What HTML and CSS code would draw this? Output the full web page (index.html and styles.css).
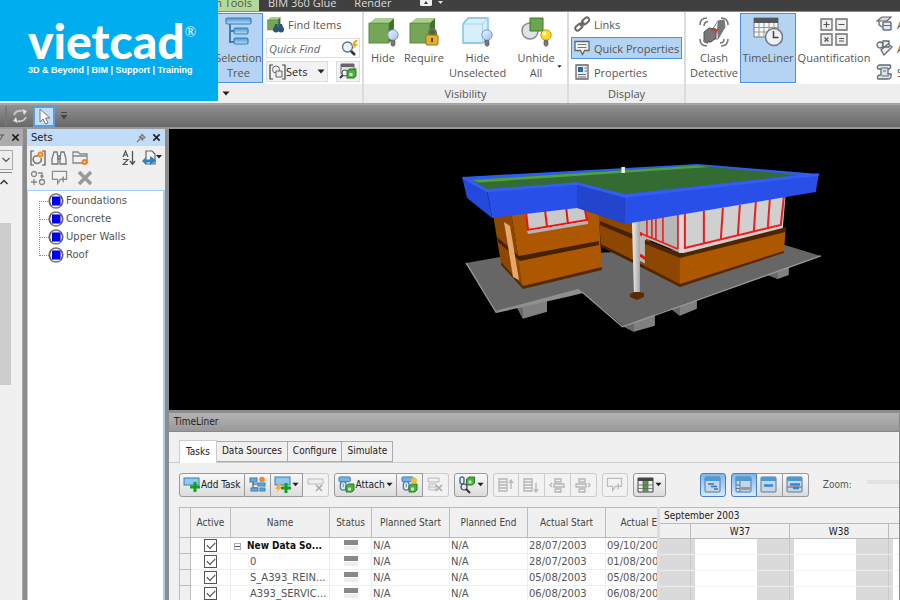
FILE: index.html
```html
<!DOCTYPE html>
<html lang="en">
<head>
<meta charset="utf-8">
<meta name="viewport" content="width=device-width, initial-scale=1">
<title>vietcad – TimeLiner</title>
<link rel="stylesheet" href="styles.css">
</head>
<body>
<svg class="defs" aria-hidden="true">
  <defs>
    <linearGradient id="bulbBlue" x1="0" y1="0" x2="1" y2="1"><stop offset="0" stop-color="#f2f8ff"/><stop offset="1" stop-color="#9dbbee"/></linearGradient>
    <linearGradient id="barBlue" x1="0" y1="0" x2="0" y2="1"><stop offset="0" stop-color="#4a97d0"/><stop offset="1" stop-color="#b4defa"/></linearGradient>
    <linearGradient id="pillar" x1="0" y1="0" x2="1" y2="0"><stop offset="0" stop-color="#f0f0f0"/><stop offset="1" stop-color="#a5a5a5"/></linearGradient>
    <symbol id="cube" viewBox="0 0 26 26"><path d="M1 6 7 1H25L20 6Z" fill="#a9cf8d"/><path d="M20 6 25 1V20L20 25Z" fill="#41702d"/><path d="M1 6H20V25H1Z" fill="#74a656" stroke="#568840"/></symbol>
    <symbol id="bulb" viewBox="0 0 12 18"><circle cx="6" cy="6" r="5.2" fill="url(#bulbBlue)" stroke="#7d9acb"/><path d="M4 11.500H8V16L6 17.500 4 16Z" fill="#777" stroke="#555" stroke-width=".6"/></symbol>
    <symbol id="bulbOn" viewBox="0 0 12 18"><circle cx="6" cy="6" r="5.200" fill="#ffd928" stroke="#c79a13"/><circle cx="4.500" cy="4.500" r="2" fill="#fff6a8"/><path d="M4 11.500H8V16L6 17.500 4 16Z" fill="#777" stroke="#555" stroke-width=".6"/></symbol>
    <symbol id="down" viewBox="0 0 8 5"><path d="M.5.5H7.500L4 4.500Z" fill="#222"/></symbol>
    <symbol id="cross" viewBox="0 0 10 10"><path d="M1.500 1.500 8.500 8.500M8.500 1.500 1.500 8.500" stroke="#222" stroke-width="1.800"/></symbol>
    <symbol id="plus" viewBox="0 0 10 10"><path d="M3.500 0H6.500V3.500H10V6.500H6.500V10H3.500V6.500H0V3.500H3.500Z" fill="#15a01c"/></symbol>
    <symbol id="clip" viewBox="0 0 18 18"><rect x="1" y="1" width="12" height="5" rx="1" fill="#72b5e4" stroke="#3d7faf"/><rect x="2.500" y="6" width="6" height="9" rx="3" fill="#e4eef8" stroke="#4f7ba8" stroke-width="1.400"/><path d="M5.500 8V12" stroke="#4f7ba8"/></symbol>
    <symbol id="box" viewBox="0 0 10 10"><path d="M1 3 3.500 1H9V7L7 9H1Z" fill="#4fae43" stroke="#2c7c25"/><path d="M3 4.500H6V7.500H3Z" fill="#bfe8b2"/></symbol>
    <symbol id="comment" viewBox="0 0 18 16"><path d="M1.500 1.500H16.500V10H10L7 14.500V10H1.500Z" fill="#f2f2f2" stroke="#8a8a8a" stroke-width="1.300"/><path d="M13 7V13M10 10H16" stroke="#8a8a8a" stroke-width="1.500"/></symbol>
    <symbol id="ball" viewBox="0 0 16 16"><circle cx="8" cy="8" r="7" fill="#eee" stroke="#777" stroke-width="1.300"/><path d="M3 3Q0 8 3 13M13 3Q16 8 13 13" stroke="#555" fill="none"/><rect x="4" y="3.500" width="8.500" height="9" fill="#0000f0"/></symbol>
    <symbol id="chart" viewBox="0 0 18 18"><rect x="1" y="1" width="15" height="15" rx="1" fill="#c9d6e2" stroke="#537b9f"/><path d="M1 1H16V5H1Z" fill="#4b9bd7"/></symbol>
    <symbol id="calc" viewBox="0 0 13 13"><path d="M1 1H12V12H1Z" fill="#efefef" stroke="#707070" stroke-width="1.400"/></symbol>
  </defs>
</svg>

<a class="brand" href="#" aria-label="vietcad home">
  <span class="brand-name">vietcad<sup>®</sup></span>
  <span class="brand-line">3D &amp; Beyond | BIM | Support | Training</span>
</a>

<nav class="ribbon-tabs" aria-label="Ribbon tabs">
  <button class="rtab active" type="button">Item Tools</button>
  <button class="rtab" type="button">BIM 360 Glue</button>
  <button class="rtab" type="button">Render</button>
  <button class="rtab mini" type="button" aria-label="Minimise ribbon">
    <svg width="24" height="8" viewBox="0 0 24 8"><rect width="12" height="7" rx="1.500" fill="#eee"/><path d="M4 5 6 2 8 5Z" fill="#333"/><path d="M18 2H23L20.500 5Z" fill="#ddd"/></svg>
  </button>
</nav>

<header class="ribbon">
  <section class="panel select-panel">
    <div class="panel-body">
      <button class="big on" type="button">
        <svg width="28" height="30" viewBox="0 0 28 30"><path d="M5 6V25H12M5 14H12" fill="none" stroke="#3c7db2" stroke-width="2"/><g fill="url(#barBlue)" stroke="#3c7db2" stroke-width="1.200"><rect x="1" y="1" width="25" height="6" rx="1.500"/><rect x="9" y="11" width="14" height="6" rx="1.500"/><rect x="9" y="21" width="14" height="6" rx="1.500"/></g></svg>
        <span>Selection Tree</span>
      </button>
      <div class="find-col">
        <button class="small find" type="button">
          <svg width="17" height="17" viewBox="0 0 17 17"><use href="#cube" width="14" height="15"/><g fill="#2f537f"><circle cx="9" cy="13.500" r="3"/><circle cx="14" cy="13.500" r="3"/><path d="M8 8H10.500L11 13H7ZM12.500 8H15L16.500 13H12Z"/></g></svg>
          <span>Find Items</span>
        </button>
        <label class="quick">
          <input type="text" placeholder="Quick Find" aria-label="Quick Find">
          <svg width="18" height="18" viewBox="0 0 18 18"><path d="M8 10 14 16" stroke="#333" stroke-width="2.500"/><circle cx="6.500" cy="8" r="5" fill="#e7f2fc" stroke="#607284" stroke-width="1.300"/><path d="M14 1 10 7H13L11 11 17 5H14L17 1Z" fill="#f5a623"/></svg>
        </label>
        <div class="sets-row">
          <button class="sets-btn" type="button" aria-haspopup="menu">
            <svg width="17" height="16" viewBox="0 0 17 16"><path d="M4 1H1V15H4M13 1H16V15H13" fill="none" stroke="#444" stroke-width="1.200"/><g fill="#eee" stroke="#666"><circle cx="7" cy="5.500" r="3.500"/><path d="M7 7H13V13H7Z"/></g></svg>
            <span>Sets</span>
            <svg class="push" width="8" height="5"><use href="#down"/></svg>
          </button>
          <button class="tool-btn" type="button" aria-label="Selection inspector">
            <svg width="18" height="17" viewBox="0 0 18 17"><path d="M2 1H15V11H2Z" fill="#ddd" stroke="#666"/><path d="M2 1H15V4H2Z" fill="#666"/><path d="M1 15 4 12" stroke="#333" stroke-width="2"/><circle cx="6" cy="10" r="3" fill="#e7f2fc" stroke="#555"/><use href="#box" x="7" y="5" width="11" height="11"/></svg>
          </button>
        </div>
      </div>
    </div>
    <h2 class="panel-title"><svg width="8" height="5"><use href="#down"/></svg></h2>
  </section>

  <section class="panel">
    <div class="panel-body">
      <button class="big w-hide" type="button">
        <svg width="31" height="30" viewBox="0 0 31 30"><use href="#cube" width="27" height="27"/><use href="#bulb" x="19" y="12" width="12" height="18"/></svg>
        <span>Hide</span>
      </button>
      <button class="big w-req" type="button">
        <svg width="31" height="30" viewBox="0 0 31 30"><use href="#cube" width="27" height="27"/><path d="M20 19V16A3.500 4 0 0 1 27 16V19" fill="none" stroke="#6f6b58" stroke-width="2"/><rect x="17" y="18" width="12" height="10" rx="1" fill="#e5af31" stroke="#9c701a"/><path d="M23 21V25" stroke="#604000" stroke-width="2"/></svg>
        <span>Require</span>
      </button>
      <button class="big w-unsel" type="button">
        <svg width="31" height="30" viewBox="0 0 31 30"><path d="M1 7 6 1H26V20L21 26H1Z" fill="#d7eefb" stroke="#75bce2" stroke-width="1.300"/><path d="M1 7H20.500L26 1M20.500 7V26" fill="none" stroke="#a3d6f0"/><use href="#bulb" x="19" y="12" width="12" height="18"/></svg>
        <span>Hide<br>Unselected</span>
      </button>
      <button class="big w-unhide" type="button">
        <svg width="31" height="30" viewBox="0 0 31 30"><circle cx="9" cy="14" r="8" fill="#e0e3e6" stroke="#858a90" stroke-width="1.500"/><path d="M9 1H22V14H9Z" fill="#6ba54c" stroke="#3f7829"/><use href="#bulbOn" x="19" y="12" width="12" height="18"/></svg>
        <span>Unhide<br>All</span>
        <svg class="corner" width="5" height="3"><use href="#down"/></svg>
      </button>
    </div>
    <h2 class="panel-title">Visibility</h2>
  </section>

  <section class="panel">
    <div class="panel-body stack">
      <button class="small" type="button">
        <svg width="16" height="16" viewBox="0 0 16 16"><g fill="none" stroke="#6c6760" stroke-width="2"><rect x="-3.500" y="-2.300" width="8" height="4.600" rx="2.300" transform="translate(4.500 11.500) rotate(-42)"/><rect x="-4.500" y="-2.300" width="8" height="4.600" rx="2.300" transform="translate(12 4.500) rotate(-42)"/><path d="M6 10 10 6"/></g></svg>
        <span>Links</span>
      </button>
      <button class="small on" type="button">
        <svg width="16" height="16" viewBox="0 0 16 16"><path d="M1 1.500H15V10.500H10.500L8.500 14.500 6.500 10.500H1Z" fill="#f4f4f4" stroke="#666" stroke-width="1.300"/><path d="M3.500 4.500H12.500M3.500 7.500H12.500" stroke="#777"/></svg>
        <span>Quick Properties</span>
      </button>
      <button class="small" type="button">
        <svg width="16" height="16" viewBox="0 0 16 16"><path d="M2 1H14V15H2Z" fill="#eee" stroke="#666" stroke-width="1.300"/><path d="M4 3H9V8H4Z" fill="#2769a8"/><path d="M10.500 4H13M10.500 7H13M4 10.500H12M4 13H12" stroke="#68737f" stroke-width="1.200"/></svg>
        <span>Properties</span>
      </button>
    </div>
    <h2 class="panel-title">Display</h2>
  </section>

  <section class="panel tools-panel">
    <div class="panel-body">
      <button class="big w-clash" type="button">
        <svg width="30" height="30" viewBox="0 0 30 30"><path d="M13 13 19 4 25 3 26 10 19 22 13 22Z" fill="#f0f0f0" stroke="#777"/><path d="M19 4 18 12 19 22 26 10 25 3Z" fill="#777"/><path d="M5 15 10 11 17 12V21L12 25H5Z" fill="#777" stroke="#555"/><path d="M12 13 18 13 16 17" stroke="#d23a27" stroke-width="1.500" fill="none"/><path d="M1 8Q1 1 8 1M5 9Q5 5 9 4.500M22 1Q29 1 29 8M1 22Q1 29 8 29M5 23Q6 26 9 26M29 22Q29 29 22 29M25 22Q25 26 21 26" fill="none" stroke="#777" stroke-width="1.600"/></svg>
        <span>Clash Detective</span>
      </button>
      <button class="big on w-time" type="button">
        <svg width="30" height="30" viewBox="0 0 30 30"><path d="M1 1H25V20H1Z" fill="#f6f6f6" stroke="#777"/><path d="M1 1H25V6H1Z" fill="#54565a"/><path d="M1 10.500H25M1 15H25M6 6V20M11 6V20M16 6V20M21 6V20" stroke="#999"/><circle cx="21" cy="20" r="8.500" fill="#eef2f6" stroke="#72777d" stroke-width="1.500"/><path d="M20.500 14V20.500H25.500" fill="none" stroke="#444" stroke-width="1.500"/></svg>
        <span>TimeLiner</span>
      </button>
      <button class="big w-quant" type="button">
        <svg width="28" height="28" viewBox="0 0 28 28"><use href="#calc" width="13" height="13"/><use href="#calc" x="15" width="13" height="13"/><use href="#calc" y="15" width="13" height="13"/><use href="#calc" x="15" y="15" width="13" height="13"/><path d="M3.500 6.500H9.500M6.500 3.500V9.500M18.500 6.500H24.500M4.500 19.500 8.500 23.500M8.500 19.500 4.500 23.500M19 20.500H24M19 23H24" stroke="#555" stroke-width="1.200"/></svg>
        <span>Quantification</span>
      </button>
      <div class="stack">
        <button class="small" type="button">
          <svg width="17" height="16" viewBox="0 0 17 16"><path d="M1 5 6 1H15L11 5ZM3 5V9L6 11" fill="#ddd" stroke="#666" stroke-width="1.200"/><rect x="7" y="6" width="8" height="8" rx="1" fill="#e9edf2" stroke="#65717e" stroke-width="1.500"/><path d="M7 9.500H15" stroke="#65717e"/></svg>
          <span>Autodesk Rendering</span>
        </button>
        <button class="small" type="button">
          <svg width="17" height="16" viewBox="0 0 17 16"><g fill="#eee" stroke="#606a76" stroke-width="1.300"><circle cx="4" cy="5" r="3"/><path d="M7 1H13V7H7ZM5 10 12 4 16 7 8 15Z"/></g></svg>
          <span>Animator</span>
        </button>
        <button class="small" type="button">
          <svg width="17" height="16" viewBox="0 0 17 16"><path d="M3 1H14Q16 3 13 5H12V10H15Q16 15 12 15H2Q0 12 4 11H5V5H2Q0 3 3 1Z" fill="#dfe2e6" stroke="#626a74" stroke-width="1.300"/><path d="M5 4H12M7 7H10M6 12H13" stroke="#626a74"/></svg>
          <span>Scripter</span>
        </button>
      </div>
    </div>
    <h2 class="panel-title"></h2>
  </section>
</header>

<div class="quick-bar" role="toolbar" aria-label="Quick access">
  <span class="grip"></span>
  <button type="button" aria-label="Refresh"><svg width="16" height="14" viewBox="0 0 16 14"><path d="M2 6Q4 1 10 2M14 8Q12 13 6 12" fill="none" stroke="#c8c8c8" stroke-width="2"/><path d="M10 0 15 2 12 6ZM6 14 1 12 4 8Z" fill="#e0e0e0"/></svg></button>
  <button class="pick" type="button" aria-label="Select"><svg width="13" height="17" viewBox="0 0 13 17"><path d="M2 1V14L5 11 7.500 16 10 15 7.500 10H12Z" fill="#fff" stroke="#6a7480"/></svg></button>
  <button type="button" aria-label="More"><svg width="8" height="8" viewBox="0 0 8 8"><path d="M1 .5H7" stroke="#444"/><path d="M.5 3H7.500L4 7.500Z" fill="#444"/></svg></button>
</div>

<main class="workspace">
  <aside class="tree-pane" aria-label="Selection tree">
    <div class="pane-head plain"><svg width="5" height="10" viewBox="0 0 5 10"><path d="M0 7 3 2M0 2H4" stroke="#555"/></svg><button type="button" aria-label="Close selection tree"><svg width="9" height="9"><use href="#cross"/></svg></button></div>
    <div class="tree-pane-body">
      <div class="combo"><select aria-label="Tree mode"><option></option></select><svg width="8" height="6" viewBox="0 0 8 6"><path d="M.5 1 4 4.500 7.500 1" fill="none" stroke="#555" stroke-width="1.200"/></svg></div>
      <button class="scroll-up" type="button" aria-label="Scroll up"><svg width="8" height="6" viewBox="0 0 8 6"><path d="M.5 5 4 1.500 7.500 5" fill="none" stroke="#333" stroke-width="1.500"/></svg></button>
      <div class="scroll-thumb"></div>
    </div>
  </aside>

  <aside class="sets-pane" aria-label="Sets">
    <div class="pane-head">
      <h2>Sets</h2>
      <button type="button" aria-label="Pin"><svg width="10" height="10" viewBox="0 0 10 10"><path d="M1 9 4 6M3 3.500 7 7.500M4.500 4 6 1.500 9 4.500 6.500 6Z" fill="#bbb" stroke="#777" stroke-width="1.200"/></svg></button>
      <button type="button" aria-label="Close sets"><svg width="9" height="9"><use href="#cross"/></svg></button>
    </div>
    <div class="sets-tools">
      <div class="tool-line">
        <button type="button" aria-label="Save selection"><svg width="16" height="16" viewBox="0 0 16 16"><path d="M4 1H1V15H4M12 1H15V15H12" fill="none" stroke="#555" stroke-width="1.200"/><path d="M5 6H8M5 6A4 4 0 1 0 11 8" fill="none" stroke="#777" stroke-width="1.500"/><circle cx="10.500" cy="4.500" r="3" fill="#f58a22"/><circle cx="10.500" cy="4.500" r="1" fill="#ffe3b0"/></svg></button>
        <button type="button" aria-label="Save search"><svg width="16" height="16" viewBox="0 0 16 16"><g fill="#f4f4f4" stroke="#777" stroke-width="1.300"><path d="M3 2H6L7 8V14H1V9ZM10 2H13L15 9V14H9V8Z"/><path d="M7 6H9V9H7Z"/></g></svg></button>
        <button type="button" aria-label="New folder"><svg width="17" height="16" viewBox="0 0 17 16"><path d="M1 2H6L8 4H15V13H1ZM1 6H15" fill="#f2f2f2" stroke="#808890" stroke-width="1.300"/><circle cx="12.500" cy="12" r="3" fill="#f57c1f"/><circle cx="12.500" cy="12" r="1" fill="#ffe3b0"/></svg></button>
        <span class="spacer"></span>
        <button type="button" aria-label="Sort"><svg width="14" height="16" viewBox="0 0 14 16"><path d="M1 7 3.500 1 6 7M2 5H5M1 9.500H6L1 14.500H6" fill="none" stroke="#555" stroke-width="1.200"/><path d="M10.500 1V14M8 11 10.500 14.500 13 11" fill="none" stroke="#555" stroke-width="1.300"/></svg></button>
        <button type="button" aria-label="Import and export"><svg width="21" height="16" viewBox="0 0 21 16"><path d="M5 1H11L14 4V14H5Z" fill="#f2f2f2" stroke="#666" stroke-width="1.200"/><path d="M1 11 5 7V9.500H9V6L15 10V11L9 15V12.500H5V15Z" fill="#2e83c8"/><path d="M15 5H21L18 8.500Z" fill="#222"/></svg></button>
      </div>
      <div class="tool-line">
        <button type="button" aria-label="Duplicate"><svg width="16" height="16" viewBox="0 0 16 16"><g fill="none" stroke="#888" stroke-width="1.300"><circle cx="4" cy="4" r="2.500"/><circle cx="12" cy="12" r="2.500"/><path d="M8 3H12V7M10.500 5.500 12 7.500 13.500 5.500M1 12H7M4 9V15"/></g></svg></button>
        <button type="button" aria-label="Add comment"><svg width="17" height="16"><use href="#comment" width="17" height="15"/></svg></button>
        <button class="delete" type="button" aria-label="Delete"><svg width="16" height="16" viewBox="0 0 16 16"><path d="M2 2 14 14M14 2 2 14" stroke="#999" stroke-width="3.600"/></svg></button>
      </div>
    </div>
    <ul class="sets-list">
      <li><svg width="16" height="16"><use href="#ball"/></svg>Foundations</li>
      <li><svg width="16" height="16"><use href="#ball"/></svg>Concrete</li>
      <li><svg width="16" height="16"><use href="#ball"/></svg>Upper Walls</li>
      <li><svg width="16" height="16"><use href="#ball"/></svg>Roof</li>
    </ul>
  </aside>

  <div class="stage">
    <div class="viewport">
      <svg viewBox="169 129 731 281" role="img" aria-label="3D building model">
        <path d="M516 306 523 319 547 312V300ZM622 326 634 332 655 326V314ZM671 309 680 316 697 309V300ZM768 275 778 279 789 275V266Z" fill="#808080"/>
        <path d="M516 306 523 319V309ZM622 326 634 332V321ZM671 309 680 316V306ZM768 275 778 279V271Z" fill="#686868"/>
        <path d="M466 263 500 257 785 245 821 256 623 326 581 291 496 312Z" fill="#666"/>
        <path d="M466 263 496 312.500 578 290 583 293 622.500 327 821 256" fill="none" stroke="#9a9a9a" stroke-width="1.300"/>
        <path d="M496 311 578 289 583 293 571 296 497 313Z" fill="#8f8f8f"/>
        <!-- recessed wall -->
        <path d="M598 205 650 220V268L601 246Z" fill="#8d4700"/>
        <path d="M600 221 640 237V242L600 225Z" fill="#452100"/>
        <path d="M601 244 681 284V287L601 247Z" fill="#452100"/>
        <path d="M638 216 646 216V264L638 260Z" fill="#b9b9b9"/>
        <path d="M639 233 646 237M640 255 646 259" stroke="#f01010" stroke-width="3"/>
        <!-- left block -->
        <path d="M493 214 511 212 523 288 501 264Z" fill="#8d4700"/>
        <path d="M511 212 598 200 602 269 523 288Z" fill="#ad5700"/>
        <path d="M497 237 519 256 599 241V245L520 261 498 242Z" fill="#452100"/>
        <path d="M501 262 523 286 602 267V270L523 289 501 265Z" fill="#552900"/>
        <path d="M504 222 510 226 519 280 513 277Z" fill="#e9a76b"/>
        <path d="M525 211 585 203 587 222 528 231Z" fill="#c9c9c9"/>
        <path d="M526 212 528 230 587 220 584 205M545 210 547 227M566 206 568 224" fill="none" stroke="#f01010" stroke-width="2"/>
        <path d="M527 231 588 221V224L528 234Z" fill="#b5b5b5"/>
        <!-- right block -->
        <path d="M645 240 680 254V286L645 268Z" fill="#8d4700"/>
        <path d="M680 254 786 228 784 253 680 286Z" fill="#ad5700"/>
        <path d="M645 240 680 253 786 227V232L680 258 645 244Z" fill="#4d2500"/>
        <path d="M645 266 680 284 784 251V253L680 287 645 269Z" fill="#552900"/>
        <path d="M642 210 679 210V252L642 237Z" fill="#b7b7b7"/>
        <path d="M679 208 786 192 783 228 684 253 679 252Z" fill="#d0d0d0"/>
        <path d="M679 208H684V253H679Z" fill="#d9d9d9"/>
        <path d="M640 233 678 249M647 216V237M652 216V239M656 218 663 217V242M656 218V239M678 212V249" fill="none" stroke="#ee1c1c" stroke-width="1.600"/>
        <path d="M685 213V248L781 225 784 197M704 211V243M723 208 721 239M740 205 738 235M756 202 754 231M770 199 768 227" fill="none" stroke="#ee1c1c" stroke-width="2"/>
        <!-- column -->
        <path d="M632 220H640V294H634Z" fill="url(#pillar)"/>
        <path d="M630 294 634 292H640L644 293V297L637 300 630 297Z" fill="#5b2c03"/>
        <!-- roof -->
        <path d="M462 177 698 164 819 174 625 197 577 184 487 191Z" fill="#2f5bf0"/>
        <path d="M472 180 697 165.500 798 175 625 194 577 182.500 487 189Z" fill="#346b33"/>
        <path d="M472 180 697 165.500 710 167 479 182.500Z" fill="#4da13e"/>
        <path d="M462 177 487 191 492 218 467 198Z" fill="#2348dc"/>
        <path d="M487 190 577 183 577 208 492 218Z" fill="#2850e8"/>
        <path d="M577 183 625 196V224L577 208Z" fill="#2344cc"/>
        <path d="M625 196 819 174 816 192 625 224Z" fill="#2850e8"/>
        <path d="M463 177.500 487 191 577 183.500 625 196.500 819 174.500" fill="none" stroke="#355df2" stroke-width="2.500"/>
        <path d="M621.500 167H625V173H621.500Z" fill="#f4f4ec"/>
      </svg>
    </div>

    <section class="timeliner">
      <h2 class="tl-head">TimeLiner</h2>
      <div class="tl-tabs" role="tablist">
        <button class="tl-tab active" role="tab" aria-selected="true" type="button">Tasks</button>
        <button class="tl-tab" role="tab" aria-selected="false" type="button">Data Sources</button>
        <button class="tl-tab" role="tab" aria-selected="false" type="button">Configure</button>
        <button class="tl-tab" role="tab" aria-selected="false" type="button">Simulate</button>
      </div>
      <div class="tl-body">
        <div class="tl-tools" role="toolbar" aria-label="Task tools">
          <div class="group">
            <button type="button"><svg width="17" height="17" viewBox="0 0 17 17"><rect x="1" y="2" width="15" height="7" fill="#8cc8f0" stroke="#3d7faf"/><use href="#plus" x="7" y="6" width="10" height="10"/></svg>Add Task</button>
            <button type="button" aria-label="Insert task"><svg width="17" height="17" viewBox="0 0 17 17"><path d="M4 5V12H9M4 8H12" stroke="#445" fill="none"/><g fill="#62abdf" stroke="#3b7fb4"><rect x="1" y="2" width="7" height="4"/><rect x="9" y="7" width="7" height="3"/><rect x="2" y="12" width="7" height="3"/><rect x="11" y="12" width="5" height="3"/></g><circle cx="13" cy="3.500" r="2.800" fill="#f5862b"/></svg></button>
            <button type="button" aria-label="Auto-add tasks"><svg width="17" height="17" viewBox="0 0 17 17"><rect x="1" y="1" width="15" height="8" fill="#8cc8f0" stroke="#3d7faf"/><path d="M5 7 1 13H4L2 17 8 11H5L8 7Z" fill="#f4ae28"/><use href="#plus" x="7" y="7" width="10" height="10"/></svg><svg width="7" height="5"><use href="#down"/></svg></button>
            <button type="button" disabled aria-label="Delete task"><svg width="17" height="17" viewBox="0 0 17 17"><path d="M1 3H16V8H1Z" fill="#eee" stroke="#bbb"/><path d="M9 9 15 15M15 9 9 15" stroke="#aaa" stroke-width="1.600"/></svg></button>
          </div>
          <div class="group">
            <button type="button"><svg width="17" height="17" viewBox="0 0 17 17"><use href="#clip" width="17" height="17"/><use href="#box" x="7" y="7" width="10" height="10"/></svg>Attach<svg width="7" height="5"><use href="#down"/></svg></button>
            <button type="button" aria-label="Auto-attach"><svg width="17" height="17" viewBox="0 0 17 17"><use href="#clip" width="17" height="17"/><use href="#box" x="7" y="7" width="10" height="10"/><circle cx="13" cy="4.500" r="3" fill="#f9bb32"/></svg></button>
            <button type="button" disabled aria-label="Clear attachment"><svg width="17" height="17" viewBox="0 0 17 17"><path d="M1 2H12V6H1ZM2 8H9V14H2ZM2 11H9" fill="#eee" stroke="#bbb"/><path d="M9 9 15 15M15 9 9 15" stroke="#aaa" stroke-width="1.600"/></svg></button>
          </div>
          <div class="group">
            <button type="button" aria-label="Find items"><svg width="18" height="18" viewBox="0 0 18 18"><rect x="2" y="1" width="4" height="7" rx="2" fill="#e4eef8" stroke="#4a6e93" stroke-width="1.500"/><use href="#box" x="7" y="0" width="11" height="10"/><circle cx="6" cy="11" r="3" fill="#dceaf7" stroke="#444" stroke-width="1.200"/><path d="M8 13 12 17" stroke="#333" stroke-width="2"/></svg><svg width="7" height="5"><use href="#down"/></svg></button>
          </div>
          <div class="group">
            <button type="button" disabled aria-label="Move up"><svg width="16" height="16" viewBox="0 0 16 16"><path d="M1 2H9V14H1ZM1 5H9M1 8H9M1 11H9M13 12V4M11 6 13 3 15 6" fill="none" stroke="#b5b5b5" stroke-width="1.300"/></svg></button>
            <button type="button" disabled aria-label="Move down"><svg width="16" height="16" viewBox="0 0 16 16"><path d="M1 2H9V14H1ZM1 5H9M1 8H9M1 11H9M13 6V14M11 12 13 15 15 12" fill="none" stroke="#b5b5b5" stroke-width="1.300"/></svg></button>
            <button type="button" disabled aria-label="Outdent"><svg width="16" height="16" viewBox="0 0 16 16"><path d="M6 2H12V5H6ZM5 7H15V10H5ZM6 12H12V15H6ZM3 6 1 8 3 10" fill="none" stroke="#b5b5b5" stroke-width="1.300"/></svg></button>
            <button type="button" disabled aria-label="Indent"><svg width="16" height="16" viewBox="0 0 16 16"><path d="M4 2H10V5H4ZM1 7H11V10H1ZM4 12H10V15H4ZM13 6 15 8 13 10" fill="none" stroke="#b5b5b5" stroke-width="1.300"/></svg></button>
          </div>
          <div class="group">
            <button type="button" disabled aria-label="Add comment"><svg class="faint" width="17" height="15"><use href="#comment"/></svg></button>
          </div>
          <div class="group">
            <button type="button" aria-label="Columns"><svg width="17" height="16" viewBox="0 0 17 16"><path d="M1 1H16V15H1Z" fill="#eee" stroke="#444"/><path d="M1 1H16V4H1Z" fill="#444"/><path d="M6 4H11V15H6Z" fill="#4aa23f"/><path d="M6 4V15M11 4V15M1 8H16M1 11.500H16" stroke="#666" stroke-width=".8"/></svg><svg width="7" height="5"><use href="#down"/></svg></button>
          </div>
          <div class="group views">
            <button class="on" type="button" aria-label="Show Gantt chart"><svg width="18" height="18" viewBox="0 0 18 18"><use href="#chart"/><path d="M4 8H10M7 10.500H13M10 13H14" stroke="#2e78b5" stroke-width="1.600"/></svg></button>
          </div>
          <div class="group">
            <button class="on" type="button" aria-label="Actual dates"><svg width="18" height="18" viewBox="0 0 18 18"><use href="#chart"/><path d="M5 5V16M1 9H5M1 12.500H5" stroke="#537b9f"/><path d="M6 12.500H15" stroke="#999" stroke-width="3"/></svg></button>
            <button type="button" aria-label="Planned dates"><svg width="18" height="18" viewBox="0 0 18 18"><use href="#chart"/><path d="M4 9.500H13" stroke="#2e88d5" stroke-width="2.500"/></svg></button>
            <button type="button" aria-label="Planned versus actual"><svg width="18" height="18" viewBox="0 0 18 18"><use href="#chart"/><path d="M1 11H16" stroke="#888" stroke-width="1.500"/><path d="M4 8.500H14M7 12H13" stroke="#2e88d5" stroke-width="2.500"/></svg></button>
          </div>
          <label class="zoom"><span>Zoom:</span><input type="range" min="0" max="100" value="100"></label>
        </div>

        <div class="plan">
          <div class="tasks">
            <table>
              <colgroup><col class="c-grip"><col class="c-active"><col class="c-name"><col class="c-status"><col class="c-date"><col class="c-date"><col class="c-date"><col class="c-date"></colgroup>
              <thead><tr><th></th><th>Active</th><th>Name</th><th>Status</th><th>Planned Start</th><th>Planned End</th><th>Actual Start</th><th>Actual End</th></tr></thead>
              <tbody>
                <tr><td></td><td><input type="checkbox" checked aria-label="New Data Source active"></td><td class="name root"><button type="button" class="fold" aria-label="Collapse"></button><b>New Data So...</b></td><td><i class="status"></i></td><td>N/A</td><td>N/A</td><td>28/07/2003</td><td>09/10/2003</td></tr>
                <tr><td></td><td><input type="checkbox" checked aria-label="0 active"></td><td class="name">0</td><td><i class="status"></i></td><td>N/A</td><td>N/A</td><td>28/07/2003</td><td>01/08/2003</td></tr>
                <tr><td></td><td><input type="checkbox" checked aria-label="S_A393_REIN active"></td><td class="name">S_A393_REIN...</td><td><i class="status"></i></td><td>N/A</td><td>N/A</td><td>05/08/2003</td><td>05/08/2003</td></tr>
                <tr><td></td><td><input type="checkbox" checked aria-label="A393_SERVIC active"></td><td class="name">A393_SERVIC...</td><td><i class="status"></i></td><td>N/A</td><td>N/A</td><td>06/08/2003</td><td>06/08/2003</td></tr>
              </tbody>
            </table>
          </div>
          <div class="splitter"></div>
          <div class="gantt">
            <div class="month">September 2003</div>
            <div class="weeks"><span></span><span>W37</span><span>W38</span><span></span></div>
            <div class="days"></div>
          </div>
        </div>
      </div>
    </section>
  </div>
</main>
</body>
</html>
```
FILE: styles.css
```css
* { box-sizing: border-box; }

body {
  margin: 0;
  height: 100vh;
  display: flex;
  flex-direction: column;
  overflow: hidden;
  position: relative;
  background: #8c8c8c;
  color: #555;
  font: 11px/15px "Open Sans", "Noto Sans", sans-serif;
}

button, input, select { font: inherit; color: inherit; }
button { margin: 0; padding: 0; border: 0; background: none; white-space: nowrap; }
h2 { margin: 0; font-size: inherit; font-weight: normal; }
svg { display: block; flex: none; }
.defs { position: absolute; width: 0; height: 0; }

/* Brand badge over the ribbon */
.brand {
  position: absolute;
  z-index: 5;
  top: 0;
  left: 0;
  width: 218px;
  height: 101px;
  padding: 18px 0 0 28px;
  background: #00adef;
  color: #fff;
  text-decoration: none;
  white-space: nowrap;
}
.brand-name { display: block; font: 900 48px/46px Lato, sans-serif; }
.brand-name sup { font: 15px/15px "Liberation Serif", serif; vertical-align: 22px; }
.brand-line { display: block; font: bold 9px/12px "Liberation Sans", sans-serif; }

/* Ribbon */
.ribbon-tabs {
  flex: none;
  display: flex;
  height: 12px;
  padding-left: 196px;
  align-items: flex-end;
  background: #404040;
  border-bottom: 1px solid #8a8a8a;
  overflow: hidden;
}
.rtab { height: 17px; padding: 0 9px; color: #ddd; line-height: 15px; }
.rtab.active { width: 63px; padding: 0 7px 0 0; text-align: right; background: #b5d99b; color: #555; }
.rtab.mini { padding: 0 0 0 20px; }

.ribbon {
  flex: none;
  display: flex;
  height: 91px;
  background: linear-gradient(#fff 0 72px, #eee 72px);
  overflow: hidden;
}
.panel { flex: none; display: flex; flex-direction: column; border-right: 2px solid #dcdcdc; }
.select-panel { padding-left: 212px; }
.tools-panel { flex: 1; border-right: 0; }
.panel-body { display: flex; height: 72px; padding: 1px 2px; }
.panel-title { height: 19px; line-height: 19px; text-align: center; }
.select-panel .panel-title { padding: 7px 10px; }

.big {
  position: relative;
  display: flex;
  flex-direction: column;
  align-items: center;
  height: 70px;
  padding-top: 3px;
  border: 1px solid transparent;
  white-space: normal;
  text-align: center;
}
.big > svg:first-child { height: 30px; margin-bottom: 3px; }
.big.on, .small.on { background: #b5d4f3; border: 1px solid #4a90dc; }
.select-panel .big { width: 49px; }
.w-hide { width: 34px; }
.w-req { width: 48px; }
.w-unsel { width: 59px; }
.w-unhide { width: 58px; }
.w-clash { width: 52px; }
.w-time { width: 56px; }
.w-quant { width: 76px; }
.corner { position: absolute; right: 2px; bottom: 14px; }

.small {
  display: flex;
  align-items: center;
  gap: 4px;
  height: 22px;
  padding: 0 2px;
  border: 1px solid transparent;
}
.small.find { padding: 0; }
.stack { display: flex; flex-direction: column; gap: 2px; }
.panel > .stack { width: 115px; }
.tools-panel .panel-body > .stack { padding-left: 1px; }

.find-col { display: flex; flex-direction: column; gap: 3px; width: 97px; padding-left: 3px; }
.quick { display: flex; align-items: center; height: 20px; border: 1px solid #ddd; background: #fff; }
.quick input { flex: 1; min-width: 0; padding: 0 2px; border: 0; background: none; outline: 0; font-style: italic; }
.quick input::placeholder { color: #666; opacity: 1; }
.sets-row { display: flex; justify-content: space-between; }
.sets-btn, .tool-btn { display: flex; align-items: center; height: 21px; background: #f2f2f2; border: 1px solid #ddd; }
.sets-btn { width: 62px; padding: 0 2px; color: #222; }
.push { margin-left: auto; }
.tool-btn { width: 24px; justify-content: center; }

/* Quick access bar */
.quick-bar {
  flex: none;
  display: flex;
  align-items: center;
  gap: 5px;
  height: 26px;
  padding: 2px 5px;
  border-top: 2px solid #a5a5a5;
  border-bottom: 2px solid #999;
  background: linear-gradient(#919191, #686868);
}
.grip { width: 2px; height: 20px; background: #777; }
.pick { display: grid; place-items: center; width: 22px; height: 21px; background: #c4def7; border: 2px solid #5b9ce0; }

/* Workspace */
.workspace { flex: 1; min-height: 0; display: flex; }
.pane-head {
  flex: none;
  display: flex;
  align-items: center;
  gap: 6px;
  height: 17px;
  padding: 0 4px;
  background: #c0dcf6;
  color: #222;
}
.pane-head h2 { flex: 1; }
.pane-head.plain { justify-content: space-between; padding: 0 4px 0 0; background: #acacac; }

.tree-pane { flex: none; display: flex; flex-direction: column; width: 23px; margin-right: 4px; background: #f0f0f0; border-right: 1px solid #aaa; }
.tree-pane-body { flex: 1; display: flex; flex-direction: column; align-items: flex-start; padding-top: 4px; }
.combo { display: grid; grid-template-areas: "c"; place-items: center; width: 13px; height: 20px; border: 1px solid #aaa; border-left: 0; }
.combo > * { grid-area: c; }
.combo select { width: 12px; height: 18px; padding: 0; border: 0; appearance: none; background: #eee; }
.combo svg { pointer-events: none; }
.scroll-up { width: 12px; margin-top: 2px; padding: 6px 0; border-top: 1px solid #888; }
.scroll-thumb { width: 11px; height: 36%; margin-top: 32px; background: #cdcdcd; }

.sets-pane { flex: none; display: flex; flex-direction: column; width: 138px; margin-right: 4px; background: #f0f0f0; font: 10px/18px "DejaVu Sans", sans-serif; }
.sets-tools { padding: 2px 3px; }
.tool-line { display: flex; gap: 5px; height: 20px; }
.tool-line .spacer { flex: 1; }
.delete { margin-left: 4px; }
.sets-list { flex: 1; margin: 0; padding: 1px 0 0 11px; list-style: none; background: #fff; border: 1px solid #a8cdf0; border-width: 1px 2px 0 1px; }
.sets-list li { position: relative; display: flex; align-items: center; gap: 2px; height: 18px; padding-left: 9px; }
.sets-list li::before { content: ""; position: absolute; left: 0; top: -9px; width: 9px; height: 18px; border: dotted #888; border-width: 0 0 1px 1px; }
.sets-list li:first-child::before { top: 8px; height: 1px; border-left: 0; }

.stage { flex: 1; min-width: 0; display: flex; flex-direction: column; gap: 3px; }
.viewport { flex: 3 1 0; min-height: 0; background: #000; }
.viewport svg { width: 100%; height: 100%; }

/* TimeLiner */
.timeliner {
  flex: 2 1 0;
  min-height: 0;
  display: flex;
  flex-direction: column;
  border-right: 1px solid #888;
  background: #f0f0f0;
  font: 10px/16px "DejaVu Sans Condensed", "DejaVu Sans", sans-serif;
  overflow: hidden;
}
.tl-head { flex: none; height: 19px; padding-left: 5px; background: linear-gradient(#b3b3b3, #999); border-bottom: 1px solid #888; color: #222; line-height: 18px; }
.tl-tabs { flex: none; display: flex; align-items: flex-end; height: 31px; padding: 0 10px; border-bottom: 1px solid #ccc; }
.tl-tab { height: 21px; padding: 0 5px; border: 1px solid #aaa; border-left: 0; color: #222; }
.tl-tab.active { height: 23px; margin-bottom: -1px; padding: 0 6px; background: #fff; border: 1px solid #ccc; border-bottom: 0; }
.tl-body { flex: 1; min-height: 0; display: flex; flex-direction: column; padding: 10px 0 0 10px; }

.tl-tools { flex: none; display: flex; gap: 5px; height: 24px; }
.group { flex: none; display: flex; }
.group button {
  display: flex;
  align-items: center;
  justify-content: center;
  gap: 1px;
  min-width: 26px;
  height: 24px;
  padding: 0 3px;
  border: 1px solid #999;
  border-left-width: 0;
  background: linear-gradient(#f8f8f8, #dcdcdc);
  color: #222;
}
.group button:first-child { border-left-width: 1px; border-radius: 3px 0 0 3px; }
.group button:last-child { border-radius: 0 3px 3px 0; }
.group button:only-child { border-radius: 3px; }
.group button:disabled { background: #f2f2f2; border-color: #ccc; }
.group button.on { background: linear-gradient(#7db5ee, #d4ebff); border-color: #4c7fb8; }
.faint { opacity: .5; }
.views { margin-left: 29px; }
.zoom { display: flex; align-items: center; gap: 15px; margin-left: 9px; }
.zoom input { appearance: none; width: 90px; height: 4px; margin: 0 0 6px; background: #e2e2e2; }

.plan { flex: 1; min-height: 0; display: grid; grid-template-columns: minmax(0, 2fr) 3px minmax(0, 1fr); margin-top: 10px; }
.tasks { overflow: hidden; background: #fff; border-top: 1px solid #bbb; border-left: 1px solid #bbb; }
table { width: 504px; border-collapse: separate; border-spacing: 0; table-layout: fixed; white-space: nowrap; }
.c-grip { width: 11px; }
.c-active { width: 40px; }
.c-name { width: 99px; }
.c-status { width: 42px; }
.c-date { width: 78px; }
th { height: 30px; padding: 2px 0 0; background: #f0f0f0; border-right: 1px solid #bbb; border-bottom: 1px solid #bbb; color: #444; font-weight: normal; }
td { height: 16px; padding: 0 1px; border-right: 1px solid #eee; border-bottom: 1px solid #eee; line-height: 15px; overflow: hidden; font-family: "DejaVu Sans", sans-serif; }
td:first-child { background: #f0f0f0; border-color: #bbb; }
td:nth-child(2), td:nth-child(4) { text-align: center; }
td input { appearance: none; display: block; width: 13px; height: 13px; margin: 0 auto; border: 1px solid #555; background: #fff; }
td input:checked::after { content: ""; display: block; width: 7px; height: 4px; margin: 2px; border: solid #333; border-width: 0 0 1px 1px; transform: rotate(-45deg); }
.name { padding-left: 19px; }
.name.root { padding-left: 3px; color: #111; font-family: "DejaVu Sans Condensed", sans-serif; }
.fold { display: inline-block; width: 7px; height: 7px; margin-right: 6px; border: 1px solid #aab; background: linear-gradient(#fff 2px, #557 2px 3px, #fff 3px); }
.status { display: block; width: 14px; height: 10px; margin: 0 auto; background: linear-gradient(#888 0 5px, #fff 5px 6px, #eee 6px); }

.splitter { background: #ddd; }
.gantt { display: flex; flex-direction: column; min-width: 0; overflow: hidden; border-top: 1px solid #bbb; color: #222; }
.month { flex: none; height: 16px; padding-left: 4px; border-bottom: 1px solid #bbb; }
.weeks { flex: none; display: flex; height: 15px; border-bottom: 1px solid #bbb; line-height: 15px; text-align: center; }
.weeks span { flex: none; width: 99px; border-right: 1px solid #bbb; }
.weeks span:first-child { width: 31px; }
.days {
  flex: 1;
  background:
    repeating-linear-gradient(transparent 0 15px, rgba(240, 240, 240, .8) 15px 16px),
    repeating-linear-gradient(90deg, #dadada 0 30px, #c8c8c8 30px 31px, #dadada 31px 35px, #fff 35px 97px, #dadada 97px 99px);
}
```
